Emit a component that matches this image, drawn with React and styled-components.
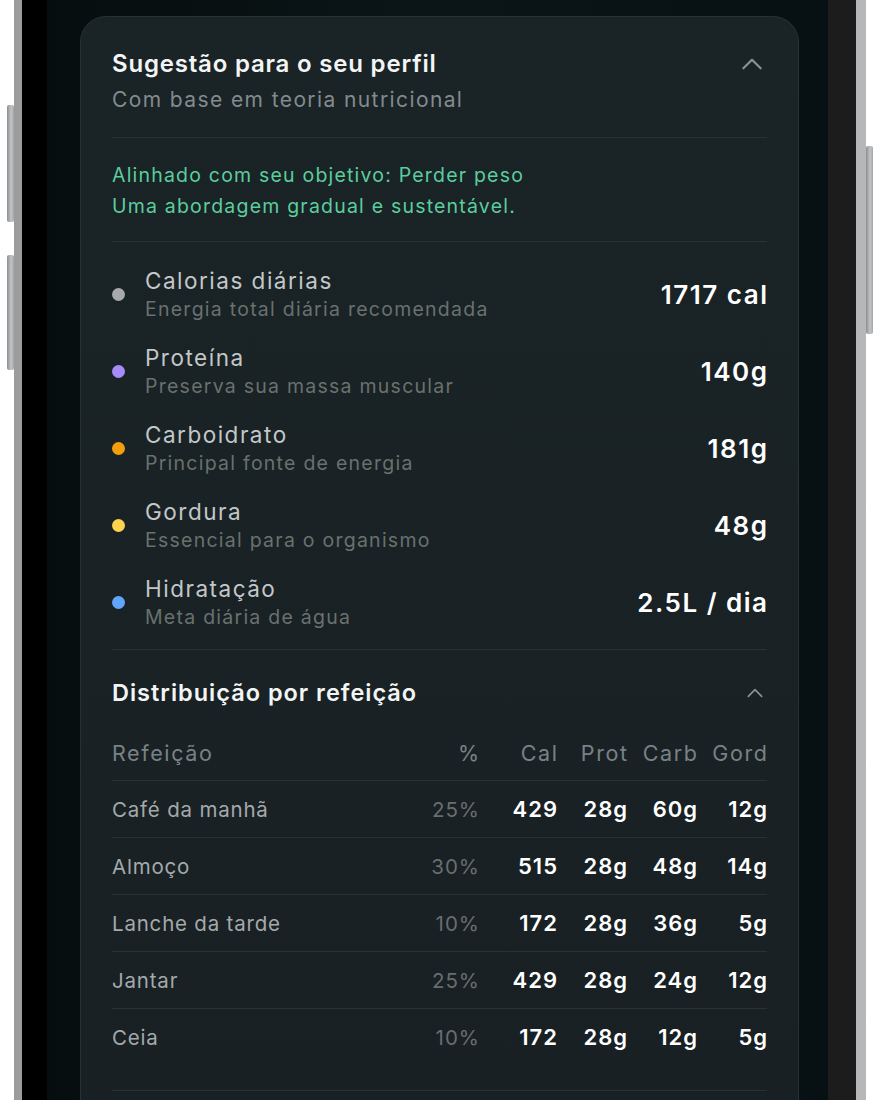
import React from "react";
import styled, { createGlobalStyle } from "styled-components";

const Global = createGlobalStyle`
  html, body { margin: 0; padding: 0; background: #ffffff; }
  body { font-family: Inter, "Noto Sans", sans-serif; -webkit-font-smoothing: antialiased; }
`;

const Page = styled.div`
  width: 880px;
  height: 1100px;
  overflow: hidden;
  position: relative;
  background: #ffffff;
  display: flex;
`;

const Phone = styled.div`
  margin-left: 14px;
  width: 852px;
  height: 1100px;
  display: flex;
  background: linear-gradient(90deg, #9a9c9e 0%, #d6d7d8 40%, #b5b7b8 100%);
  padding: 0 10px 0 8px;
  box-sizing: border-box;
`;

const Bezel = styled.div`
  flex: 1;
  display: flex;
  border-left: 25px solid #000000;
  border-right: 28px solid #1c1c1c;
`;

const Screen = styled.div`
  flex: 1;
  background: linear-gradient(90deg, #060d0e 0%, #0b1517 50%, #071012 100%);
  padding: 16px 29px 0 33px;
  box-sizing: border-box;
`;

const SideButton = styled.div`
  position: absolute;
  left: ${(p) => p.$left}px;
  top: ${(p) => p.$top}px;
  width: 7px;
  height: ${(p) => p.$h}px;
  border-radius: 2px;
  background: linear-gradient(90deg, #8d8f91, #c4c5c6 60%, #a2a4a6);
`;

const Card = styled.div`
  background: linear-gradient(180deg, #1a2326 0%, #182023 100%);
  border: 1px solid #273033;
  border-radius: 26px;
  padding: 32px 31px 40px;
  min-height: 1200px;
  box-sizing: border-box;
`;

const HeaderRow = styled.div`
  display: flex;
  justify-content: space-between;
  align-items: flex-start;
  padding-bottom: 23px;
  border-bottom: 1px solid #283134;
`;

const HeaderText = styled.div`
  display: flex;
  flex-direction: column;
  gap: 7px;
`;

const Title = styled.div`
  font-size: 24px;
  line-height: 30px;
  font-weight: 600;
  letter-spacing: 0.8px;
  color: #f3f5f5;
`;

const Subtitle = styled.div`
  font-size: 21px;
  line-height: 28px;
  letter-spacing: 1.4px;
  color: #838b8e;
`;

const ChevronBtn = styled.div`
  display: flex;
  align-items: center;
  justify-content: center;
  height: 30px;
  margin-right: ${(p) => p.$mr || 0}px;
  color: #8a9295;
`;

const Note = styled.div`
  padding: 22px 0 19px;
  border-bottom: 1px solid #283134;
  font-size: 19.5px;
  line-height: 31px;
  letter-spacing: 1.2px;
  color: #5ccd9e;
`;

const NutrientList = styled.div`
  padding: 14px 0 8px;
  border-bottom: 1px solid #283134;
`;

const NutrientRow = styled.div`
  height: 77px;
  display: flex;
  align-items: center;
`;

const Dot = styled.span`
  width: 13px;
  height: 13px;
  border-radius: 50%;
  background: ${(p) => p.$color};
  margin-right: 20px;
  flex-shrink: 0;
`;

const NutrientText = styled.div`
  flex: 1;
  display: flex;
  flex-direction: column;
`;

const NutrientLabel = styled.div`
  font-size: 22.5px;
  line-height: 28px;
  letter-spacing: 1.5px;
  color: #c3c7c8;
`;

const NutrientSub = styled.div`
  font-size: 19.5px;
  line-height: 28px;
  letter-spacing: 1.25px;
  color: #69716f;
`;

const NutrientValue = styled.div`
  font-size: 26px;
  font-weight: 600;
  color: #ffffff;
  letter-spacing: 1.5px;
  margin-right: -1.5px;
`;

const SectionHeader = styled.div`
  display: flex;
  justify-content: space-between;
  align-items: center;
  padding-top: 28px;
  margin-bottom: 18px;
`;

const SectionTitle = styled.div`
  font-size: 23.5px;
  line-height: 30px;
  font-weight: 600;
  letter-spacing: 1px;
  color: #f3f5f5;
`;

const TableRow = styled.div`
  display: grid;
  grid-template-columns: 1fr 70px 78px 70px 70px 70px;
  align-items: center;
  height: ${(p) => (p.$head ? 54 : 56)}px;
  border-bottom: ${(p) => (p.$last ? "none" : "1px solid #283134")};
`;

const HeadCell = styled.div`
  font-size: 21.5px;
  color: #7a8285;
  letter-spacing: 1.6px;
  text-align: ${(p) => (p.$left ? "left" : "right")};
  margin-right: ${(p) => (p.$left ? "0" : "-1.6px")};
  white-space: nowrap;
`;

const NameCell = styled.div`
  font-size: 20.5px;
  letter-spacing: 0.8px;
  color: #a4a9ab;
`;

const PctCell = styled.div`
  font-size: 20.5px;
  letter-spacing: 1px;
  margin-right: -1px;
  color: #676e70;
  text-align: right;
`;

const NumCell = styled.div`
  font-size: 22px;
  font-weight: 600;
  letter-spacing: 1px;
  margin-right: -1px;
  color: #ffffff;
  text-align: right;
`;

const TableEnd = styled.div`
  height: 25px;
  border-bottom: 1px solid #283134;
`;

const ChevronUp = ({ size = 24, width = 2 }) => (
  <svg width={size} height={size} viewBox="0 0 24 24" fill="none" stroke="currentColor" strokeWidth={width} strokeLinecap="round" strokeLinejoin="round">
    <path d="M4 16 L12 8 L20 16" />
  </svg>
);

const nutrients = [
  { color: "#a7aaab", label: "Calorias diárias", sub: "Energia total diária recomendada", value: "1717 cal" },
  { color: "#a78bfa", label: "Proteína", sub: "Preserva sua massa muscular", value: "140g" },
  { color: "#f59e0b", label: "Carboidrato", sub: "Principal fonte de energia", value: "181g" },
  { color: "#fcd34d", label: "Gordura", sub: "Essencial para o organismo", value: "48g" },
  { color: "#60a5fa", label: "Hidratação", sub: "Meta diária de água", value: "2.5L / dia" },
];

const meals = [
  ["Café da manhã", "25%", "429", "28g", "60g", "12g"],
  ["Almoço", "30%", "515", "28g", "48g", "14g"],
  ["Lanche da tarde", "10%", "172", "28g", "36g", "5g"],
  ["Jantar", "25%", "429", "28g", "24g", "12g"],
  ["Ceia", "10%", "172", "28g", "12g", "5g"],
];

export default function App() {
  return (
    <Page>
      <Global />
      <SideButton $left={7} $top={105} $h={117} />
      <SideButton $left={7} $top={255} $h={115} />
      <SideButton $left={866} $top={146} $h={188} />
      <Phone>
        <Bezel>
          <Screen>
            <Card>
              <HeaderRow>
                <HeaderText>
                  <Title>Sugestão para o seu perfil</Title>
                  <Subtitle>Com base em teoria nutricional</Subtitle>
                </HeaderText>
                <ChevronBtn $mr={2}>
                  <ChevronUp size={26} width={2} />
                </ChevronBtn>
              </HeaderRow>
              <Note>
                Alinhado com seu objetivo: Perder peso
                <br />
                Uma abordagem gradual e sustentável.
              </Note>
              <NutrientList>
                {nutrients.map((n) => (
                  <NutrientRow key={n.label}>
                    <Dot $color={n.color} />
                    <NutrientText>
                      <NutrientLabel>{n.label}</NutrientLabel>
                      <NutrientSub>{n.sub}</NutrientSub>
                    </NutrientText>
                    <NutrientValue>{n.value}</NutrientValue>
                  </NutrientRow>
                ))}
              </NutrientList>
              <SectionHeader>
                <SectionTitle>Distribuição por refeição</SectionTitle>
                <ChevronBtn $mr={2}>
                  <ChevronUp size={20} width={2} />
                </ChevronBtn>
              </SectionHeader>
              <TableRow $head>
                <HeadCell $left>Refeição</HeadCell>
                <HeadCell>%</HeadCell>
                <HeadCell>Cal</HeadCell>
                <HeadCell>Prot</HeadCell>
                <HeadCell>Carb</HeadCell>
                <HeadCell>Gord</HeadCell>
              </TableRow>
              {meals.map((m, i) => (
                <TableRow key={m[0]} $last={i === meals.length - 1}>
                  <NameCell>{m[0]}</NameCell>
                  <PctCell>{m[1]}</PctCell>
                  <NumCell>{m[2]}</NumCell>
                  <NumCell>{m[3]}</NumCell>
                  <NumCell>{m[4]}</NumCell>
                  <NumCell>{m[5]}</NumCell>
                </TableRow>
              ))}
              <TableEnd />
            </Card>
          </Screen>
        </Bezel>
      </Phone>
    </Page>
  );
}
